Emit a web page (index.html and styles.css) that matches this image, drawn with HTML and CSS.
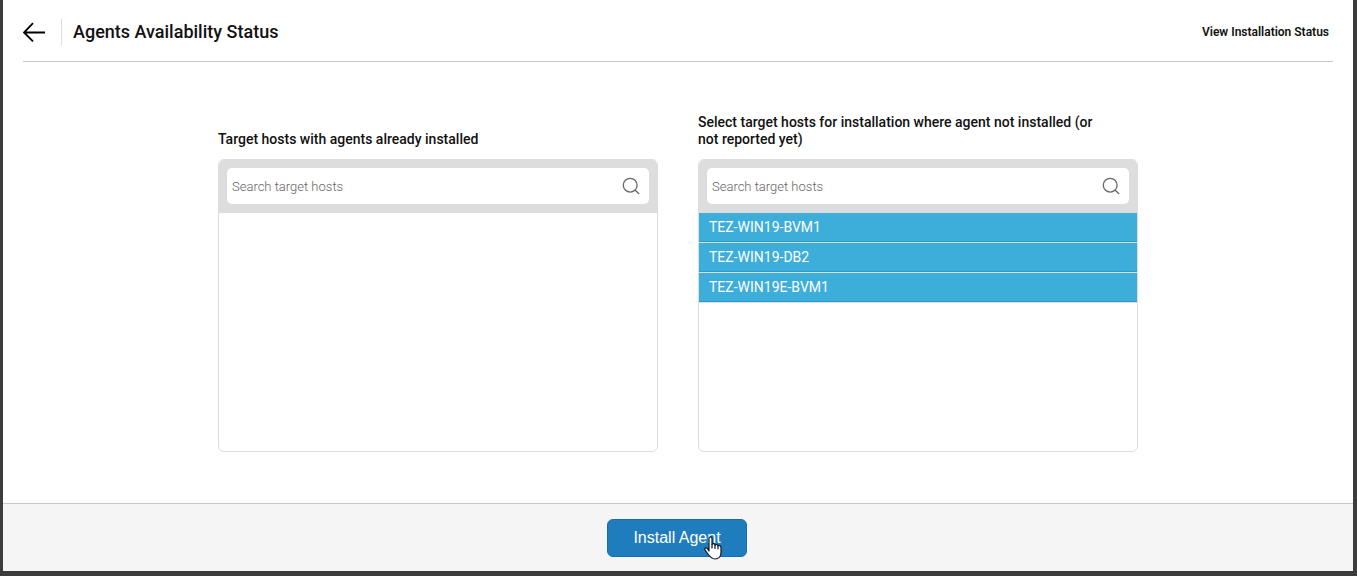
FILE: index.html
```
<!DOCTYPE html>
<html lang="en">
<head>
    <meta charset="UTF-8">
    <meta name="viewport" content="width=device-width, initial-scale=1.0">
    <title>Agents Availability Status</title>
    <link rel="stylesheet" href="styles.css">
</head>
<body>
    <header class="page-header">
        <button type="button" class="back" aria-label="Back">
            <svg width="22" height="20" viewBox="0 0 22 20" fill="none" stroke="#000" stroke-width="1.8">
                <path d="M22 10.5H1M10 1.2L1 10.5L10 19.4"/>
            </svg>
        </button>
        <h1>Agents Availability Status</h1>
        <a href="#" class="status-link">View Installation Status</a>
    </header>

    <main class="content">
        <section class="host-column">
            <h2>Target hosts with agents already installed</h2>
            <div class="host-panel">
                <div class="search-bar">
                    <label class="search-box">
                        <input type="text" placeholder="Search target hosts" aria-label="Search installed target hosts">
                        <svg width="18" height="18" viewBox="0 0 18 18" fill="none" stroke="#666" stroke-width="1.3">
                            <circle cx="8.2" cy="8.2" r="6.9"/>
                            <path d="M13 13L17.2 17"/>
                        </svg>
                    </label>
                </div>
                <ul class="host-list"></ul>
            </div>
        </section>

        <section class="host-column">
            <h2>Select target hosts for installation where agent not installed (or not reported yet)</h2>
            <div class="host-panel">
                <div class="search-bar">
                    <label class="search-box">
                        <input type="text" placeholder="Search target hosts" aria-label="Search target hosts for installation">
                        <svg width="18" height="18" viewBox="0 0 18 18" fill="none" stroke="#666" stroke-width="1.3">
                            <circle cx="8.2" cy="8.2" r="6.9"/>
                            <path d="M13 13L17.2 17"/>
                        </svg>
                    </label>
                </div>
                <ul class="host-list">
                    <li><button type="button" class="host" aria-pressed="true">TEZ-WIN19-BVM1</button></li>
                    <li><button type="button" class="host" aria-pressed="true">TEZ-WIN19-DB2</button></li>
                    <li><button type="button" class="host" aria-pressed="true">TEZ-WIN19E-BVM1</button></li>
                </ul>
            </div>
        </section>
    </main>

    <footer class="page-footer">
        <div class="install">
            <button type="button" class="install-button">Install Agent</button>
            <!-- hand pointer -->
            <svg class="pointer" width="18" height="24" viewBox="0 0 18 24" fill="#fff" stroke="#111827" stroke-width="1.2" stroke-linejoin="round" stroke-linecap="round">
                <path d="M5 15V2.6C5 .4 8 .4 8 2.6V8.6C8.2 7.2 11 7.4 11 9.2C11.4 8 14 8.4 14 10C14.6 9 17 9.4 17 11.2V16.5C17 20 14.8 23 11 23C7.6 23 5.6 20.6 3.2 17L.9 13.6C.2 12 2 11.2 3.2 12.4Z"/>
                <path d="M8 8.6V12M11 9.2V12.4M14 10V12.8" fill="none"/>
            </svg>
        </div>
    </footer>
</body>
</html>
```
FILE: styles.css
```
* {
    box-sizing: border-box;
}

/* Page frame */
body {
    display: flex;
    flex-direction: column;
    min-height: 100vh;
    margin: 0;
    border: solid #3c3c3c;
    border-width: 0 4px 5px 3px;
    background-color: #fff;
    color: #111;
    font-family: Roboto, "Liberation Sans", sans-serif;
}

h1, h2, ul {
    margin: 0;
    padding: 0;
}

button {
    border: none;
    cursor: pointer;
}

/* Header */
.page-header {
    display: flex;
    align-items: center;
    height: 62px;
    margin: 0 20px;
    padding-top: 3px;
    border-bottom: 1px solid #c8c8c8;
}

.back {
    display: flex;
    padding: 0;
    background: none;
}

h1 {
    margin-left: 16px;
    padding: 0 0 2px 11px;
    border-left: 1px solid #ddd;
    font-size: 18px;
    font-weight: 500;
    line-height: 25px;
}

.status-link {
    margin-left: auto;
    padding-right: 4px;
    color: #111;
    font-size: 12px;
    font-weight: 600;
    text-decoration: none;
}

/* Host lists */
.content {
    display: flex;
    flex: 1;
    align-items: end;
    justify-content: center;
    gap: 40px;
    padding: 51px 20px;
}

.host-column {
    width: 440px;
}

h2 {
    margin-bottom: 11px;
    padding-right: 24px;
    font-size: 14px;
    font-weight: 500;
    line-height: 17px;
}

.host-panel {
    overflow: hidden;
    border: 1px solid #ddd;
    border-radius: 6px;
}

.search-bar {
    padding: 8px 8px 9px;
    background-color: #ddd;
}

.search-box {
    display: flex;
    align-items: center;
    height: 36px;
    padding: 0 9px 0 5px;
    border-radius: 5px;
    background-color: #fff;
}

.search-box input {
    flex: 1;
    padding: 0;
    border: none;
    outline: none;
    background: none;
    color: #333;
    font-family: inherit;
    font-size: 13px;
    font-weight: 300;
}

.search-box input::placeholder {
    color: #666;
}

.host-list {
    height: 238px;
    overflow-y: auto;
    list-style: none;
}

.host-list li {
    border-bottom: 1px solid #ddd;
}

.host {
    display: block;
    width: 100%;
    height: 29px;
    padding: 0 10px;
    border-bottom: 1px solid #2a9ccb;
    background-color: #3dadda;
    color: #fff;
    font-family: inherit;
    font-size: 14px;
    text-align: left;
}

/* Footer */
.page-footer {
    display: flex;
    justify-content: center;
    padding: 15px 2px 14px 0;
    border-top: 1px solid #c8c8c8;
    background-color: #f5f5f5;
}

.install {
    position: relative;
}

.install-button {
    display: block;
    width: 140px;
    height: 38px;
    border: 1px solid #1a6ea8;
    border-radius: 6px;
    background-color: #1f7dbd;
    color: #fff;
    font-family: "Liberation Sans", Arial, sans-serif;
    font-size: 16px;
}

.pointer {
    position: absolute;
    top: 17px;
    left: 97px;
    pointer-events: none;
}
```
